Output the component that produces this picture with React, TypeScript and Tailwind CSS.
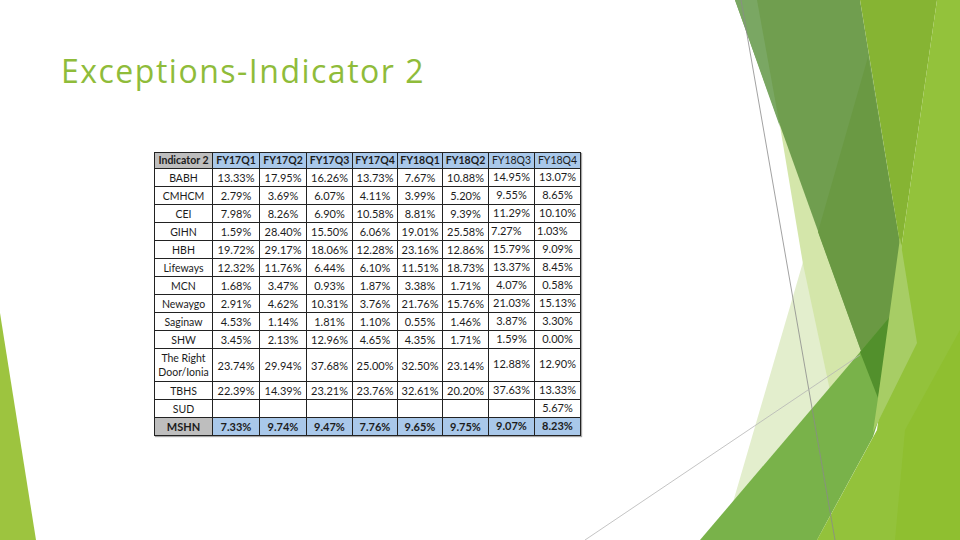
import React from "react";

const headers = ["FY17Q1", "FY17Q2", "FY17Q3", "FY17Q4", "FY18Q1", "FY18Q2", "FY18Q3", "FY18Q4"];

const rows: { name: string; vals: string[]; tall?: boolean; left?: number[] }[] = [
  { name: "BABH", vals: ["13.33%", "17.95%", "16.26%", "13.73%", "7.67%", "10.88%", "14.95%", "13.07%"] },
  { name: "CMHCM", vals: ["2.79%", "3.69%", "6.07%", "4.11%", "3.99%", "5.20%", "9.55%", "8.65%"] },
  { name: "CEI", vals: ["7.98%", "8.26%", "6.90%", "10.58%", "8.81%", "9.39%", "11.29%", "10.10%"] },
  { name: "GIHN", vals: ["1.59%", "28.40%", "15.50%", "6.06%", "19.01%", "25.58%", "7.27%", "1.03%"], left: [6, 7] },
  { name: "HBH", vals: ["19.72%", "29.17%", "18.06%", "12.28%", "23.16%", "12.86%", "15.79%", "9.09%"] },
  { name: "Lifeways", vals: ["12.32%", "11.76%", "6.44%", "6.10%", "11.51%", "18.73%", "13.37%", "8.45%"] },
  { name: "MCN", vals: ["1.68%", "3.47%", "0.93%", "1.87%", "3.38%", "1.71%", "4.07%", "0.58%"] },
  { name: "Newaygo", vals: ["2.91%", "4.62%", "10.31%", "3.76%", "21.76%", "15.76%", "21.03%", "15.13%"] },
  { name: "Saginaw", vals: ["4.53%", "1.14%", "1.81%", "1.10%", "0.55%", "1.46%", "3.87%", "3.30%"] },
  { name: "SHW", vals: ["3.45%", "2.13%", "12.96%", "4.65%", "4.35%", "1.71%", "1.59%", "0.00%"] },
  { name: "The Right Door/Ionia", vals: ["23.74%", "29.94%", "37.68%", "25.00%", "32.50%", "23.14%", "12.88%", "12.90%"], tall: true },
  { name: "TBHS", vals: ["22.39%", "14.39%", "23.21%", "23.76%", "32.61%", "20.20%", "37.63%", "13.33%"] },
  { name: "SUD", vals: ["", "", "", "", "", "", "", "5.67%"] },
];

const mshn = ["7.33%", "9.74%", "9.47%", "7.76%", "9.65%", "9.75%", "9.07%", "8.23%"];

const Decoration = () => (
  <svg className="absolute inset-0" width="960" height="540" viewBox="0 0 960 540">
    <polygon points="0,313 36,540 0,540" fill="#9dc43f" />
    <polygon points="803,262 722,540 820,540 845,420 830,330" fill="#e3eecd" />
    <polygon points="779,120 803,264 832,400 878,398" fill="#d4e6aa" />
    <polygon points="735,0 860,0 901,250 878,398" fill="#709e4f" />
    <polygon points="868,57 901,250 878,398 818,232" fill="#6a9943" />
    <polygon points="735,0 757,0 780,127" fill="#7aa763" />
    <polygon points="860,0 937,0 901,250" fill="#86b433" />
    <polygon points="700,540 906,298 917,300 873,437 817,540" fill="#79b24a" />
    <polygon points="860,352 893,313 878,398" fill="#52902c" />
    <polygon points="937,0 960,0 960,540 817,540 877,430 901,250" fill="#93c23b" />
    <polygon points="900,238 917,343 873,432 878,398" fill="#a7cd65" />
    <polygon points="905,430 960,330 960,540 895,540" fill="#8fbf30" />
    <line x1="741" y1="0" x2="835" y2="540" stroke="#8a8a8a" strokeWidth="0.8" />
    <line x1="585" y1="540" x2="860" y2="355" stroke="#b5b5b5" strokeWidth="0.8" />
  </svg>
);

export default function App() {
  return (
    <div className="relative w-[960px] h-[540px] overflow-hidden bg-white">
      <Decoration />
      <div className="relative">
        <h1
          className="pl-[61px] pt-[52px] text-[32px] leading-[38px] tracking-[1.5px] text-[#8fbc3a]"
          style={{ fontFamily: '"Open Sans", sans-serif' }}
        >
          Exceptions-Indicator 2
        </h1>
        <div className="pl-[154px] pt-[62px]">
          <table
            className="table-fixed w-[426px] border-collapse text-[11px] text-[#1c1c1c] shadow-[1px_1px_1px_rgba(0,0,0,0.35)]"
            style={{ fontFamily: "Lato, sans-serif" }}
          >
            <colgroup>
              <col className="w-[58px]" />
              <col className="w-[47px]" />
              <col className="w-[47px]" />
              <col className="w-[46px]" />
              <col className="w-[45px]" />
              <col className="w-[45px]" />
              <col className="w-[46px]" />
              <col className="w-[46px]" />
              <col className="w-[46px]" />
            </colgroup>
            <thead>
              <tr className="h-[16px] text-[10.5px]">
                <th className="border border-[#222] bg-[#bebebe] font-bold p-0 leading-none whitespace-nowrap">Indicator 2</th>
                {headers.map((h, i) => (
                  <th
                    key={h}
                    className={`border border-[#222] bg-[#a9c8ea] p-0 leading-none ${i >= 6 ? "font-normal" : "font-bold"}`}
                  >
                    {h}
                  </th>
                ))}
              </tr>
            </thead>
            <tbody>
              {rows.map((r) => (
                <tr key={r.name} className={r.tall ? "h-[33px]" : "h-[18px]"}>
                  <td className="border border-[#222] p-0 text-center leading-[14px] text-[10.5px]">
                    {r.tall ? (
                      <>
                        The Right
                        <br />
                        Door/Ionia
                      </>
                    ) : (
                      r.name
                    )}
                  </td>
                  {r.vals.map((v, i) => (
                    <td
                      key={i}
                      className={`border border-[#222] p-0 leading-none ${
                        r.left && r.left.includes(i) ? "text-left pl-[2px]" : "text-center"
                      } ${i >= 6 ? "pb-[3px]" : ""}`}
                    >
                      {v}
                    </td>
                  ))}
                </tr>
              ))}
              <tr className="h-[18px]">
                <td className="border border-[#222] bg-[#bebebe] p-0 text-center font-bold leading-none">MSHN</td>
                {mshn.map((v, i) => (
                  <td
                    key={i}
                    className={`border border-[#222] bg-[#a9c8ea] p-0 text-center font-bold leading-none ${i >= 6 ? "pb-[3px]" : ""}`}
                  >
                    {v}
                  </td>
                ))}
              </tr>
            </tbody>
          </table>
        </div>
      </div>
    </div>
  );
}
